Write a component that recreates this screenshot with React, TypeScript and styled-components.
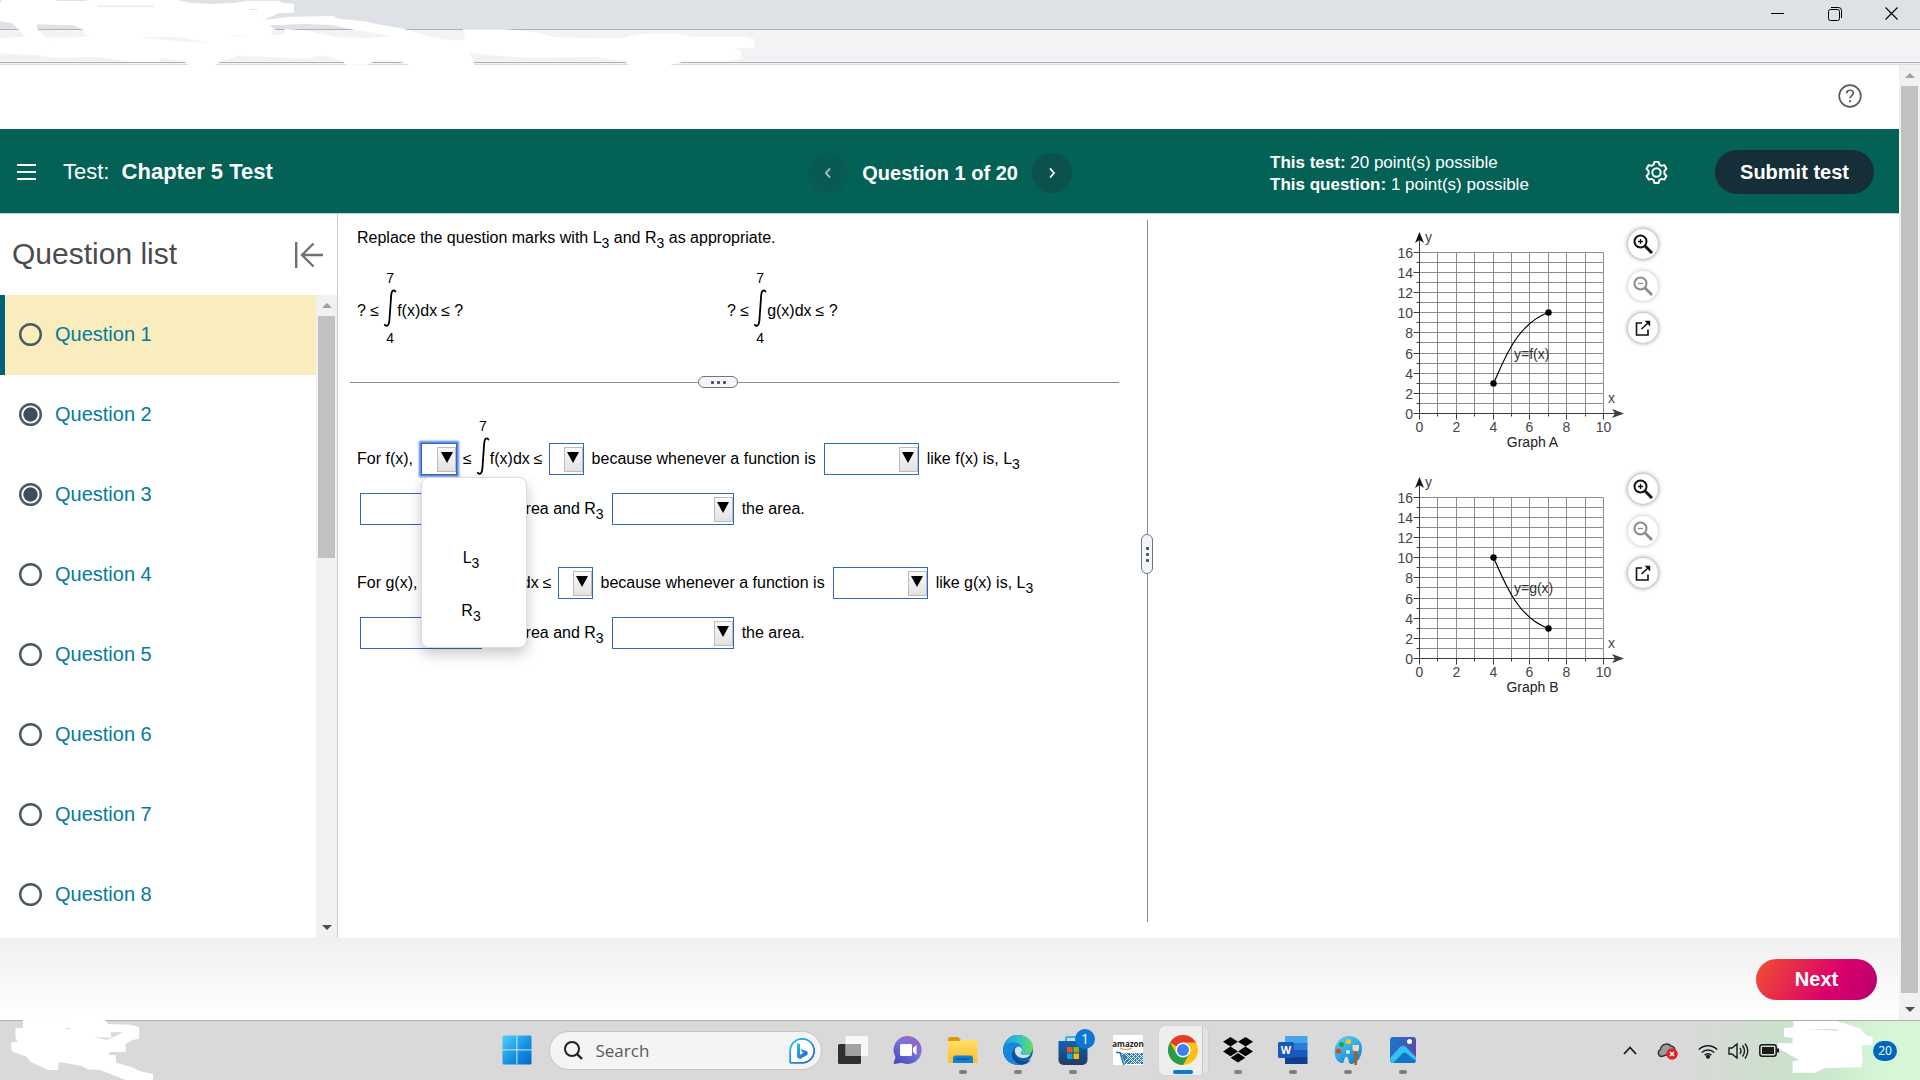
import React, { useState } from "react";
import styled, { createGlobalStyle, css } from "styled-components";

const GlobalStyle = createGlobalStyle`
  *, *::before, *::after { box-sizing: border-box; }
  body { margin: 0; background: #fff; }
  body, button, select, input {
    font-family: "Liberation Sans", Arial, Helvetica, sans-serif;
  }
  button { border: 0; padding: 0; background: none; color: inherit; cursor: pointer; }
  svg { display: block; flex: none; }
`;

/* ---------- window frame ---------- */

const Screen = styled.div`
  position: relative;
  display: flex;
  flex-direction: column;
  height: 100vh;
  overflow: hidden;
  font-size: 16px;
  color: #000;
`;

const TitleBar = styled.header`
  display: flex;
  justify-content: flex-end;
  gap: 32px;
  height: 30px;
  padding: 0 16px 6px 0;
  background: #dee1e6;
  border-bottom: 1px solid #b0b2b5;
`;

const WindowButton = styled.button`
  display: grid;
  place-items: center;
  width: 25px;
  height: 27px;
`;

const AddressBar = styled.div`
  height: 35px;
  background: #f1f3f4;
  border-bottom: 1px solid #dadcdf;

  &::after {
    content: "";
    display: block;
    height: 33px;
    border-bottom: 1px solid #b0b2b5;
  }
`;

const Viewport = styled.div`
  display: flex;
  flex: 1;
  min-height: 0;
`;

const Page = styled.div`
  display: flex;
  flex: 1;
  flex-direction: column;
  min-width: 0;
`;

const Track = styled.div`
  display: flex;
  flex: none;
  flex-direction: column;
  align-items: center;
  width: 21px;
  background: #f1f1f1;
`;

const TrackButton = styled.button<{ $dim?: boolean }>`
  display: grid;
  place-items: center;
  width: 21px;
  height: 21px;
  color: ${(p) => (p.$dim ? "#a0a0a0" : "#4d4d4d")};
`;

const TrackRoom = styled.div`
  flex: 1;
  width: 17px;
`;

const Thumb = styled.div<{ $share: number }>`
  height: ${(p) => p.$share}%;
  background: #c1c1c1;
`;

function ScrollBar({ share }: { share: number }) {
  return (
    <Track>
      <TrackButton $dim aria-label="Scroll up">
        <svg width="10" height="5" viewBox="0 0 10 5"><path d="M0 5 5 0l5 5z" fill="currentColor" /></svg>
      </TrackButton>
      <TrackRoom><Thumb $share={share} /></TrackRoom>
      <TrackButton aria-label="Scroll down">
        <svg width="10" height="5" viewBox="0 0 10 5"><path d="M0 0 5 5l5-5z" fill="currentColor" /></svg>
      </TrackButton>
    </Track>
  );
}

const HelpBar = styled.div`
  display: flex;
  align-items: center;
  justify-content: flex-end;
  height: 64px;
  padding: 0 37px 2px 0;
`;

const IconButton = styled.button`
  display: grid;
  place-items: center;
`;

/* ---------- test header ---------- */

const TestHeader = styled.div`
  display: grid;
  grid-template-columns: 791fr auto 198fr 604px;
  align-items: center;
  height: 85px;
  padding: 2px 25px 0 17px;
  background: #036156;
  border-bottom: 1px solid #b9cfd0;
  color: #fff;
`;

const TestName = styled.div`
  display: flex;
  align-items: center;
  gap: 27px;
`;

const TestTitle = styled.h1`
  margin: 0;
  font-size: 22px;
  line-height: 26px;
  font-weight: 400;

  b { margin-left: 6px; }
`;

const Pager = styled.nav`
  display: flex;
  align-items: center;
  gap: 14px;
  padding-top: 2px;
  font-size: 20px;
  font-weight: 700;
`;

const PagerButton = styled.button<{ $quiet?: boolean }>`
  display: grid;
  place-items: center;
  width: 40px;
  height: 40px;
  border-radius: 50%;
  background: ${(p) => (p.$quiet ? "#075b52" : "#0d514d")};
  color: ${(p) => (p.$quiet ? "#a9c8c4" : "#fff")};
`;

const HeaderSide = styled.div`
  grid-column: 4;
  display: flex;
  align-items: center;
  gap: 46px;
`;

const Points = styled.p`
  flex: 1;
  margin: 0;
  padding-top: 3px;
  font-size: 17px;
  line-height: 22px;
`;

const SubmitButton = styled.button`
  width: 159px;
  height: 44px;
  border-radius: 22px;
  background: #162e38;
  color: #fff;
  font-size: 20px;
  font-weight: 700;
`;

/* ---------- question list ---------- */

const Work = styled.div`
  display: flex;
  flex: 1;
  min-height: 0;
`;

const Sidebar = styled.aside`
  display: flex;
  flex: none;
  flex-direction: column;
  width: 338px;
  border-right: 1px solid #c9ccd6;
`;

const SidebarHead = styled.div`
  display: flex;
  align-items: center;
  justify-content: space-between;
  height: 81px;
  padding: 0 14px 0 12px;
`;

const SidebarTitle = styled.h2`
  margin: 0;
  padding-bottom: 2px;
  font-size: 30px;
  font-weight: 400;
  color: #4b4b4f;
`;

const SidebarBody = styled.div`
  display: flex;
  flex: 1;
  min-height: 0;
`;

const QuestionItems = styled.ul`
  flex: 1;
  margin: 0;
  padding: 0;
  overflow: hidden;
  list-style: none;
`;

const QuestionLink = styled.a<{ $active: boolean }>`
  display: flex;
  align-items: center;
  gap: 13px;
  height: 80px;
  padding: 0 0 2px 14px;
  border-left: 5px solid ${(p) => (p.$active ? "#00617a" : "transparent")};
  background: ${(p) => (p.$active ? "#f9ecbd" : "transparent")};
  color: #047a9c;
  font-size: 20px;
  line-height: 24px;
  text-decoration: none;
`;

function Mark({ done }: { done: boolean }) {
  return (
    <svg width="23" height="23" viewBox="0 0 23 23">
      <circle cx="11.5" cy="11.5" r="10.3" fill="none" stroke="#4b5865" strokeWidth="2.4" />
      {done && <circle cx="11.5" cy="11.5" r="7.2" fill="#404e5c" />}
    </svg>
  );
}

/* ---------- question pane ---------- */

const QuestionPane = styled.main`
  flex: 791 1 0;
  min-width: 0;
  padding: 12px 0 0 12px;
`;

const Prompt = styled.p`
  margin: 0 0 0 7px;
  line-height: 24px;
`;

const Sub = styled.span`
  font-size: 14px;
  line-height: 0;
  vertical-align: -5px;
`;

const Given = styled.div`
  display: grid;
  grid-template-columns: 1fr 1fr;
  height: 126px;
  padding: 24px 44px 0 7px;
`;

const MathLine = styled.span<{ $inset?: boolean }>`
  display: flex;
  flex: none;
  align-items: center;
  gap: 4px;
  height: 74px;
  white-space: nowrap;
  ${(p) => p.$inset && css`margin: 0 -2px;`}
`;

const IntegralBody = styled.span`
  display: flex;
  align-items: center;
`;

const IntegralSign = styled.span`
  display: flex;
  flex-direction: column;
  align-items: center;
  gap: 4px;
  padding-bottom: 6px;
  font-size: 14px;
  line-height: 14px;
`;

function Integral({ children }: { children: React.ReactNode }) {
  return (
    <IntegralBody>
      <IntegralSign>
        <span>7</span>
        <svg width="14" height="38" viewBox="0 0 14 38">
          <path
            d="M12.400 2.500C10.500.2 8.600 1.600 8.200 6L6.400 31.500C6 36.500 4 38 1.800 35.800"
            fill="none" stroke="#000" strokeWidth="1.800" strokeLinecap="round"
          />
        </svg>
        <span>4</span>
      </IntegralSign>
      {children}
    </IntegralBody>
  );
}

const Divider = styled.div`
  display: grid;
  grid-template-columns: 348fr 40px 381fr;
  align-items: center;
  margin-right: 22px;
`;

const HLine = styled.span`
  height: 1px;
  background: #858a9e;
`;

const Grip = styled.button<{ $upright?: boolean }>`
  display: flex;
  flex: none;
  flex-direction: ${(p) => (p.$upright ? "column" : "row")};
  align-items: center;
  justify-content: center;
  gap: 3px;
  width: ${(p) => (p.$upright ? 12 : 40)}px;
  height: ${(p) => (p.$upright ? 40 : 12)}px;
  border: 1px solid #6a7585;
  border-radius: 6px;
  background: #f3f5f7;

  i {
    width: 3px;
    height: 3px;
    background: #4c4f5c;
    border-radius: 1px;
  }
`;

const Answers = styled.form`
  padding: 37px 0 0 7px;
`;

const AnswerGroup = styled.div`
  margin-bottom: 24px;
`;

const AnswerRow = styled.div<{ $tall?: boolean }>`
  display: flex;
  align-items: center;
  gap: 8px;
  height: ${(p) => (p.$tall ? 68 : 32)}px;
  padding-left: ${(p) => (p.$tall ? 0 : 3)}px;
  white-space: nowrap;
`;

const Field = styled.span<{ $width: number }>`
  position: relative;
  display: grid;
  flex: none;
  align-items: center;
  width: ${(p) => p.$width}px;
  height: 32px;
`;

const Choice = styled.select<{ $open?: boolean }>`
  grid-area: 1 / 1;
  width: 100%;
  height: 32px;
  appearance: none;
  border: 1px solid #2f66cc;
  border-radius: 0;
  background: #fff;
  font-size: 16px;
  outline: none;
  ${(p) => p.$open && css`box-shadow: 0 0 2px 2px #5b83de;`}
`;

const Arrow = styled.span`
  grid-area: 1 / 1;
  justify-self: end;
  display: grid;
  place-items: center;
  width: 19px;
  height: 25px;
  margin-right: 1px;
  padding-bottom: 4px;
  border: 1px solid #bcbcbc;
  background: linear-gradient(#fafafa, #e2e2e2);
  pointer-events: none;
`;

const Menu = styled.ul`
  position: absolute;
  z-index: 2;
  top: 34px;
  left: 0;
  width: 106px;
  margin: 0;
  padding: 0 6px 10px 0;
  border: 1px solid #dcdcdc;
  border-radius: 8px;
  background: #fff;
  box-shadow: 0 6px 14px rgba(0, 0, 0, 0.22);
  list-style: none;
`;

const MenuItem = styled.li`
  display: grid;
  place-items: center;
  height: 53px;
`;

function Dropdown({ width, label, open }: { width: number; label: string; open?: boolean }) {
  return (
    <Field $width={width}>
      <Choice $open={open} aria-label={label} defaultValue="">
        <option value="" />
      </Choice>
      <Arrow>
        <svg width="12" height="11" viewBox="0 0 12 11"><path d="M0 0h12L6 11z" /></svg>
      </Arrow>
      {open && (
        <Menu role="listbox" aria-label={label}>
          <MenuItem role="option" />
          <MenuItem role="option"><span>L<Sub>3</Sub></span></MenuItem>
          <MenuItem role="option"><span>R<Sub>3</Sub></span></MenuItem>
        </Menu>
      )}
    </Field>
  );
}

function AnswerPart({ fn, open }: { fn: string; open?: boolean }) {
  return (
    <AnswerGroup>
      <AnswerRow $tall>
        <span>For {fn}(x),</span>
        <Dropdown width={36} label={`Lower bound for ${fn}`} open={open} />
        <MathLine $inset>≤<Integral>{fn}(x)dx</Integral>≤</MathLine>
        <Dropdown width={35} label={`Upper bound for ${fn}`} />
        <span>because whenever a function is</span>
        <Dropdown width={95} label={`Behaviour of ${fn}`} />
        <span>like {fn}(x) is, L<Sub>3</Sub></span>
      </AnswerRow>
      <AnswerRow>
        <Dropdown width={122} label={`Left sum of ${fn}`} />
        <span>the area and R<Sub>3</Sub></span>
        <Dropdown width={122} label={`Right sum of ${fn}`} />
        <span>the area.</span>
      </AnswerRow>
    </AnswerGroup>
  );
}

const VDivider = styled.div`
  display: flex;
  flex: none;
  flex-direction: column;
  align-items: center;
  width: 12px;
  padding: 6px 0 16px;
`;

const VLine = styled.span<{ $grow: number }>`
  flex: ${(p) => p.$grow};
  width: 1px;
  background: #858a9e;
`;

/* ---------- graphs ---------- */

const GraphPane = styled.section`
  display: flex;
  flex: 746 1 0;
  flex-direction: column;
  align-items: center;
  gap: 24px;
  min-width: 0;
  padding-top: 15px;
`;

const GraphRow = styled.div`
  display: flex;
  gap: 3px;
`;

const Figure = styled.figure`
  width: 230px;
  margin: 0;
`;

const Caption = styled.figcaption`
  padding-left: 46px;
  font-size: 14px;
  line-height: 16px;
  text-align: center;
  color: #222;
`;

const Plot = styled.svg`
  font-size: 14px;
  overflow: visible;
`;

const Tools = styled.div`
  display: flex;
  flex-direction: column;
  gap: 12px;
`;

const ToolButton = styled.button<{ $faint?: boolean }>`
  display: grid;
  place-items: center;
  width: 30px;
  height: 30px;
  border-radius: 50%;
  background: #fff;
  color: ${(p) => (p.$faint ? "#8a8a8a" : "#111")};
  box-shadow: 0 0 5px rgba(0, 0, 0, ${(p) => (p.$faint ? 0.28 : 0.5)});
`;

const gx = (v: number) => 24.5 + Math.round(v * 18.4);
const gy = (v: number) => 184.5 - Math.round(v * 10.08);
const steps = (n: number) => Array.from({ length: n + 1 }, (_, i) => i);

type Pt = [number, number];

function Graph({ name, label, labelY, curve }: { name: string; label: string; labelY: number; curve: Pt[] }) {
  const [a, b, c, d] = curve.map(([x, y]) => `${gx(x)} ${gy(y)}`);
  const ends = [curve[0], curve[3]];
  return (
    <GraphRow>
      <Figure>
        <Plot width="230" height="205" viewBox="0 0 230 205">
          <g stroke="#8c8c8c">
            {steps(10).slice(1).map((i) => <path key={`v${i}`} d={`M${gx(i)} ${gy(0)}V${gy(16)}`} />)}
            {steps(16).slice(1).map((i) => <path key={`h${i}`} d={`M${gx(0)} ${gy(i)}H${gx(10)}`} />)}
          </g>
          <g stroke="#3c3c3c">
            {steps(10).map((i) => <path key={`tx${i}`} d={`M${gx(i)} ${gy(0)}v${i % 2 ? 3 : 6}`} />)}
            {steps(16).map((i) => <path key={`ty${i}`} d={`M${gx(0)} ${gy(i)}h${i % 2 ? -3 : -6}`} />)}
            <path d={`M${gx(0)} ${gy(0)}V9M${gx(0)} ${gy(0)}H222`} />
          </g>
          <path d="M24.500 3 29 14l-4.500-3-4.500 3z" fill="#111" />
          <path d="M229 184.500 217 180l3 4.500-3 4.500z" fill="#3c3c3c" />
          <g fill="#444">
            {steps(8).map((i) => (
              <text key={i} x="18" y={gy(i * 2) + 5} textAnchor="end">{i * 2}</text>
            ))}
            {steps(5).map((i) => (
              <text key={i} x={gx(i * 2)} y="203" textAnchor="middle">{i * 2}</text>
            ))}
            <text x="30" y="13">y</text>
            <text x="213" y="174">x</text>
          </g>
          <text x="119" y={labelY} fill="#333">{label}</text>
          <path d={`M${a}C${b} ${c} ${d}`} fill="none" stroke="#000" strokeWidth="1.200" />
          {ends.map(([x, y]) => <circle key={x} cx={gx(x)} cy={gy(y)} r="3.200" />)}
        </Plot>
        <Caption>{name}</Caption>
      </Figure>
      <Tools>
        <ToolButton aria-label={`Zoom in on ${name}`}>
          <svg width="20" height="20" viewBox="0 0 20 20" fill="none" stroke="currentColor">
            <circle cx="7.500" cy="7.500" r="6" strokeWidth="2" />
            <path d="M7.500 5v5M5 7.500h5" strokeWidth="1.300" />
            <path d="m12 12 7 7" strokeWidth="3" />
          </svg>
        </ToolButton>
        <ToolButton $faint aria-label={`Zoom out of ${name}`}>
          <svg width="20" height="20" viewBox="0 0 20 20" fill="none" stroke="currentColor">
            <circle cx="7.500" cy="7.500" r="6" strokeWidth="2" />
            <path d="M5 7.500h5" strokeWidth="1.300" />
            <path d="m12 12 7 7" strokeWidth="2.600" />
          </svg>
        </ToolButton>
        <ToolButton aria-label={`Open ${name} in a window`}>
          <svg width="16" height="16" viewBox="0 0 16 16" fill="none" stroke="currentColor" strokeWidth="1.600">
            <path d="M7 3H1.500v12H13V9.500" />
            <path d="M6.500 9 13 3" />
            <path d="M9.500.8h5.700v5.700z" fill="currentColor" stroke="none" />
          </svg>
        </ToolButton>
      </Tools>
    </GraphRow>
  );
}

const Footer = styled.footer`
  display: flex;
  align-items: center;
  justify-content: flex-end;
  height: 82px;
  padding-right: 22px;
  background: linear-gradient(#f0f0f0, #fff);
`;

const NextButton = styled.button`
  width: 121px;
  height: 41px;
  border-radius: 21px;
  background: linear-gradient(120deg, #ee4b33 5%, #db006b 62%, #b8006f 95%);
  color: #fff;
  font-size: 20px;
  font-weight: 700;
`;

/* ---------- taskbar ---------- */

const Taskbar = styled.div`
  display: grid;
  flex: none;
  grid-template-columns: 1fr auto 1fr;
  height: 60px;
  border-top: 1px solid #b0b0b0;
  background: linear-gradient(to right, #d9d9d9 88%, #c9e3c9 94%, #d6f6d6 98%);
`;

const Apps = styled.div`
  grid-column: 2;
  display: flex;
  padding-top: 5px;
`;

const AppButton = styled.button<{ $front?: boolean }>`
  display: flex;
  flex-direction: column;
  align-items: center;
  gap: 5px;
  width: 49px;
  height: 49px;
  margin: 0 3px;
  padding-top: 9px;
  border-radius: 6px;
  ${(p) => p.$front && css`
    background: linear-gradient(to right, #eee 43px, #c9c9c9 43px 44px, #e2e2e2 44px);
    box-shadow: 0 0 1px #aaa;
  `}
`;

const Running = styled.i<{ $front?: boolean }>`
  width: ${(p) => (p.$front ? 20 : 8)}px;
  height: 4px;
  border-radius: 2px;
  background: ${(p) => (p.$front ? "#0a78d4" : "#7f7f7f")};
`;

const SearchBox = styled.label`
  display: flex;
  align-items: center;
  gap: 13px;
  width: 273px;
  height: 39px;
  margin: 5px 4px 0;
  padding: 0 6px 0 14px;
  border: 1px solid #c4c4c4;
  border-radius: 20px;
  background: #f4f4f4;

  input {
    flex: 1;
    min-width: 0;
    padding: 0;
    border: 0;
    outline: 0;
    background: none;
    color: #555;
    font: 17px "Open Sans", "Noto Sans", sans-serif;
  }
  input::placeholder { color: #5a5a5a; opacity: 1; }
`;

const Tray = styled.div`
  display: flex;
  align-items: center;
  justify-content: flex-end;
  padding-right: 23px;
`;

const TrayIcons = styled.div`
  display: flex;
  align-items: center;
  gap: 10px;
  margin-right: 94px;
`;

const TraySpaced = styled.span`
  margin-right: 10px;
`;

const Count = styled.span`
  display: grid;
  place-items: center;
  width: 24px;
  height: 20px;
  border-radius: 10px;
  background: #0067c0;
  color: #fff;
  font: 12px/20px "Open Sans", "Noto Sans", sans-serif;
`;

const icons: { name: string; running?: boolean; front?: boolean; art: React.ReactNode }[] = [
  {
    name: "Task view",
    art: (
      <>
        <rect x="0" y="9" width="23" height="20" rx="1.500" fill="#30302e" />
        <rect x="7.500" y="1" width="22.500" height="20" rx="1.500" fill="#fff" opacity=".82" />
        <rect x="7.500" y="9" width="15.500" height="12" fill="#8f8f8f" opacity=".75" />
      </>
    ),
  },
  {
    name: "Chat",
    art: (
      <>
        <path d="M15 1a14 14 0 1 1-6 26.800L1.500 29c-.8 0-1-.5-.8-1.200L2.500 22A14 14 0 0 1 15 1z" fill="url(#chat)" />
        <rect x="7" y="9" width="12" height="12" rx="1.500" fill="#fff" />
        <path d="m20 13 3.500-3v10L20 17z" fill="#fff" />
      </>
    ),
  },
  {
    name: "File Explorer",
    running: true,
    art: (
      <>
        <path d="M0 4a2 2 0 0 1 2-2h8l3 3-2 5H0z" fill="#dc9a07" />
        <path d="M0 6h11l2-1h16.500v22a1 1 0 0 1-1 1H1a1 1 0 0 1-1-1z" fill="url(#folder)" />
        <path d="M5 28v-5a2.500 2.500 0 0 1 2.500-2.500h15A2.500 2.500 0 0 1 25 23v5z" fill="#1180d0" />
        <path d="M8.500 24h13" stroke="#0a58a0" strokeWidth="1.500" />
      </>
    ),
  },
  {
    name: "Edge",
    running: true,
    art: (
      <>
        <circle cx="15" cy="15" r="15" fill="#0c63b5" />
        <path d="M0 14C1 6 7 0 15 0c9 0 15 6 15 12 0 5-3.500 8-8 8-3 0-4.500-1-4.500-2 0-1 1.500-1.500 1.500-4 0-3-4-6-9-6-5 0-8 3-10 6z" fill="url(#edge)" />
        <path d="M0 14C2 9 6 7.500 10 7.500c5 0 9 2.500 9 6.500-1-2-3-3-5-2.500-3 1-5 4-4 8 1 5 5 8.500 8 10C7 31 0 24 0 14z" fill="#1488dc" />
        <path d="M11.500 14.500c-2 6 3 12 10 12 3 0 5-.8 6.500-2-2 3-5 5-9 5.500-6-1-10.500-6-10-11 .2-2 1-3.500 2.500-4.500z" fill="#134a94" />
        <path d="M12 14c1-2 3-3 5-2 1.500.7 2 2 2 3 0 1.500-1.500 2-1.500 3s1.500 2 4.500 2c3.500 0 5-1 6-2-1 3-4 5-8 5-5 0-9-4-8-9z" fill="#dbe3ea" />
      </>
    ),
  },
  {
    name: "Microsoft Store",
    running: true,
    art: (
      <>
        <path d="M8 7V4a2 2 0 0 1 2-2h10a2 2 0 0 1 2 2v3" fill="none" stroke="#27b8ef" strokeWidth="2" />
        <path d="M0.500 6h29v19a5 5 0 0 1-5 5h-19a5 5 0 0 1-5-5z" fill="url(#store)" />
        <path d="M9 12h5.500v5.500H9z" fill="#f25022" />
        <path d="M15.500 12H21v5.500h-5.500z" fill="#7fba00" />
        <path d="M9 18.500h5.500V24H9z" fill="#00a4ef" />
        <path d="M15.500 18.500H21V24h-5.500z" fill="#ffb900" />
        <circle cx="27" cy="4" r="10" fill="#0b78d6" />
        <text x="27" y="9" textAnchor="middle" fill="#fff" fontSize="14" fontFamily="Open Sans, sans-serif">1</text>
      </>
    ),
  },
  {
    name: "Amazon",
    art: (
      <>
        <path d="M0 0h30v30H0z" fill="#fff" />
        <text x="15" y="11.500" textAnchor="middle" fontSize="8" fontWeight="700" fontFamily="Open Sans, sans-serif" fill="#222">amazon</text>
        <path d="M7 13q6 3 12 0" fill="none" stroke="#f29a2e" strokeWidth="1.200" />
        <path d="M3 17.500h4L11 30" fill="none" stroke="#1c72a8" strokeWidth="1.500" />
        <path d="M8 18h22v11H12z" fill="#2d81b3" />
        <path
          d="m9 20 2-2 11 11m-9-11 11 11M17 18l11 11M21 18l9 9M25 18l5 5M11 27l9-9M13 29l11-11M17 29l11-11M21 29l9-9M25 29l5-5"
          stroke="#fff" strokeWidth=".9" fill="none"
        />
      </>
    ),
  },
  {
    name: "Chrome",
    running: true,
    front: true,
    art: (
      <>
        <circle cx="15" cy="15" r="15" fill="#fbc116" />
        <path d="M15 15 2 7.500A15 15 0 0 1 28 7.500H15z" fill="#e33b2e" />
        <path d="M2 7.500A15 15 0 0 0 15 30l6.500-11.200L8.500 18.700z" fill="#2a9c49" />
        <circle cx="15" cy="15" r="7.500" fill="#fff" />
        <circle cx="15" cy="15" r="6" fill="#3c82ee" />
      </>
    ),
  },
  {
    name: "Dropbox",
    running: true,
    art: <path d="m7.500 2 7.500 4.800-7.500 4.800L0 6.800zM22.500 2 30 6.800l-7.500 4.800L15 6.800zM0 16.400l7.500-4.800 7.500 4.800-7.500 4.800zM22.500 11.600l7.500 4.800-7.500 4.800-7.500-4.800zM7.700 22.700l7.300-4.700 7.300 4.700L15 27.500z" />,
  },
  {
    name: "Word",
    running: true,
    art: (
      <>
        <path d="M7 1h22.500v8H7z" fill="#42a5ee" />
        <path d="M7 8h22.500v7H7z" fill="#2c7cd6" />
        <path d="M7 15h22.500v7H7z" fill="#185abd" />
        <path d="M7 22h22.500v7H7z" fill="#103f91" />
        <rect x="0" y="7" width="16" height="16" rx="1.500" fill="#1b57b8" />
        <text x="8" y="19" textAnchor="middle" fill="#fff" fontSize="11" fontWeight="700">W</text>
      </>
    ),
  },
  {
    name: "Paint",
    running: true,
    art: (
      <>
        <path d="M16 1c8 0 13 6 13 12 0 8-4 15-10 16-4 .5-3-4-4-6-1.500-3-4 0-4 3 0 2-2 3-5 1-3-2-4.500-6-4.500-10C1.500 8 8 1 16 1z" fill="url(#paint)" />
        <circle cx="15.500" cy="6.500" r="2.600" fill="#f9c412" />
        <circle cx="8.500" cy="9.500" r="2.600" fill="#2aa24a" />
        <circle cx="5.500" cy="16" r="2.600" fill="#d94a20" />
        <circle cx="15" cy="17" r="2" fill="#dff1fb" />
        <path d="M19.500 10h6.500v4l-1.500 3h-3.500l-1.500-3z" fill="#efd9bb" />
        <path d="M21 16h3.500l-.5 14h-2.500z" fill="#a5602a" />
      </>
    ),
  },
  {
    name: "Photos",
    running: true,
    art: (
      <>
        <rect x="2" y="2" width="26" height="26" rx="3" fill="url(#photos)" />
        <path d="m2 23 10-11q3-2.500 6 0l10 10v3a3 3 0 0 1-3 3H5a3 3 0 0 1-3-3z" fill="#33c1ef" />
        <path d="m5 28 10-10q1.500-1 3 0l10 8a3 3 0 0 1-3 2z" fill="#1276c8" />
        <circle cx="21.500" cy="6.500" r="2.500" fill="#fff" />
      </>
    ),
  },
];

/* Shared paint definitions, kept out of the flow. */
const Defs = styled.svg`
  position: absolute;
`;

function Gradients() {
  return (
    <Defs width="0" height="0" aria-hidden="true">
      <defs>
        <linearGradient id="win" x2="1" y2="1"><stop stopColor="#4fd0fb" /><stop offset=".6" stopColor="#118de0" /><stop offset="1" stopColor="#0468c8" /></linearGradient>
        <linearGradient id="chat" x1="1" x2=".3" y2="1"><stop stopColor="#a45fb5" /><stop offset=".5" stopColor="#7a74dd" /><stop offset="1" stopColor="#4a50c0" /></linearGradient>
        <linearGradient id="folder" x2="0" y2="1"><stop stopColor="#ffdf6b" /><stop offset="1" stopColor="#fcbd2c" /></linearGradient>
        <linearGradient id="edge"><stop stopColor="#1d9bdc" /><stop offset=".5" stopColor="#2fc0d0" /><stop offset="1" stopColor="#67dd5d" /></linearGradient>
        <linearGradient id="store" x2="0" y2="1"><stop stopColor="#0d62b4" /><stop offset="1" stopColor="#253a66" /></linearGradient>
        <linearGradient id="paint" x2=".6" y2="1"><stop stopColor="#5fd4f5" /><stop offset="1" stopColor="#1287d3" /></linearGradient>
        <linearGradient id="photos" x2="1" y2=".4"><stop stopColor="#1578d0" /><stop offset="1" stopColor="#5a4aa8" /></linearGradient>
        <linearGradient id="bing" x2="1" y2="1"><stop stopColor="#22c5ea" /><stop offset="1" stopColor="#2358d8" /></linearGradient>
      </defs>
    </Defs>
  );
}

/* White brush strokes that cover private parts of the screen. */
const Brush = styled.svg<{ $corner: "top" | "left" | "right" }>`
  position: absolute;
  pointer-events: none;
  ${(p) => p.$corner === "top" && css`top: 0; left: 0;`}
  ${(p) => p.$corner === "left" && css`bottom: 0; left: 0;`}
  ${(p) => p.$corner === "right" && css`bottom: 0; right: 40px;`}
`;

export default function App() {
  const [current, setCurrent] = useState(1);
  const done = [2, 3];
  return (
    <Screen>
      <GlobalStyle />
      <Gradients />
      <TitleBar>
        <WindowButton aria-label="Minimize">
          <svg width="13" height="13" viewBox="0 0 13 13"><path d="M0 6.500h13" stroke="#000" /></svg>
        </WindowButton>
        <WindowButton aria-label="Restore">
          <svg width="14" height="14" viewBox="0 0 14 14" fill="none" stroke="#000">
            <rect x=".5" y="2.500" width="11" height="11" rx="2" />
            <path d="M3 .5h7.500a3 3 0 0 1 3 3V11" />
          </svg>
        </WindowButton>
        <WindowButton aria-label="Close">
          <svg width="13" height="13" viewBox="0 0 13 13"><path d="m.5.500 12 12m0-12-12 12" stroke="#000" strokeWidth="1.100" /></svg>
        </WindowButton>
      </TitleBar>
      <AddressBar />
      <Viewport>
        <Page>
          <HelpBar>
            <IconButton aria-label="Help">
              <svg width="24" height="24" viewBox="0 0 24 24" fill="none" stroke="#565b5e">
                <circle cx="12" cy="12" r="10.800" strokeWidth="1.700" />
                <path d="M8.700 9.300c0-4 6.600-4 6.600-.3 0 2.600-3.300 2.600-3.300 5.300" strokeWidth="1.700" />
                <path d="M12 16.300v2" strokeWidth="1.900" />
              </svg>
            </IconButton>
          </HelpBar>
          <TestHeader>
            <TestName>
              <IconButton aria-label="Menu">
                <svg width="19" height="18" viewBox="0 0 19 18" stroke="#fff" strokeWidth="2"><path d="M0 2h19M0 9h19M0 16h19" /></svg>
              </IconButton>
              <TestTitle>Test: <b>Chapter 5 Test</b></TestTitle>
            </TestName>
            <Pager>
              <PagerButton $quiet aria-label="Previous question">
                <svg width="6" height="10" viewBox="0 0 6 10" fill="none" stroke="currentColor" strokeWidth="1.800"><path d="M5 .5 1 5l4 4.500" /></svg>
              </PagerButton>
              <span>Question {current} of 20</span>
              <PagerButton aria-label="Next question">
                <svg width="6" height="10" viewBox="0 0 6 10" fill="none" stroke="currentColor" strokeWidth="1.800"><path d="m1 .5 4 4.500-4 4.500" /></svg>
              </PagerButton>
            </Pager>
            <HeaderSide>
              <Points>
                <b>This test:</b> 20 point(s) possible<br />
                <b>This question:</b> 1 point(s) possible
              </Points>
              <IconButton aria-label="Settings">
                <svg width="25" height="25" viewBox="0 0 24 24" fill="none" stroke="#fff" strokeWidth="1.900" strokeLinejoin="round">
                  <path d="M10 1.800h4l.8 2.700 2 1.100 2.700-.7 2 3.500-1.900 2v2.900l1.900 2-2 3.500-2.700-.7-2 1.200-.8 2.700h-4l-.8-2.700-2-1.200-2.700.7-2-3.500 1.900-2v-2.900l-1.900-2 2-3.500 2.700.7 2-1.100z" />
                  <circle cx="12" cy="12" r="4" />
                </svg>
              </IconButton>
              <SubmitButton>Submit test</SubmitButton>
            </HeaderSide>
          </TestHeader>
          <Work>
            <Sidebar>
              <SidebarHead>
                <SidebarTitle>Question list</SidebarTitle>
                <IconButton aria-label="Collapse question list">
                  <svg width="28" height="26" viewBox="0 0 28 26" fill="none" stroke="#6a7370" strokeWidth="2.400">
                    <path d="M1.200 0v26M28 13H7M18.500 1.500 7 13l11.500 11.500" />
                  </svg>
                </IconButton>
              </SidebarHead>
              <SidebarBody>
                <QuestionItems>
                  {[1, 2, 3, 4, 5, 6, 7, 8].map((n) => (
                    <li key={n}>
                      <QuestionLink href={`#q${n}`} $active={n === current} onClick={() => setCurrent(n)}>
                        <Mark done={done.includes(n)} />
                        Question {n}
                      </QuestionLink>
                    </li>
                  ))}
                </QuestionItems>
                <ScrollBar share={40.3} />
              </SidebarBody>
            </Sidebar>
            <QuestionPane>
              <Prompt>Replace the question marks with L<Sub>3</Sub> and R<Sub>3</Sub> as appropriate.</Prompt>
              <Given>
                <MathLine>? ≤<Integral>f(x)dx</Integral>≤ ?</MathLine>
                <MathLine>? ≤<Integral>g(x)dx</Integral>≤ ?</MathLine>
              </Given>
              <Divider>
                <HLine />
                <Grip type="button" aria-label="Resize question"><i /><i /><i /></Grip>
                <HLine />
              </Divider>
              <Answers>
                <AnswerPart fn="f" open />
                <AnswerPart fn="g" />
              </Answers>
            </QuestionPane>
            <VDivider>
              <VLine $grow={314} />
              <Grip $upright aria-label="Resize panes"><i /><i /><i /></Grip>
              <VLine $grow={348} />
            </VDivider>
            <GraphPane>
              <Graph name="Graph A" label="y=f(x)" labelY={130} curve={[[4, 3], [4.6, 5.5], [5.3, 8.9], [7, 10]]} />
              <Graph name="Graph B" label="y=g(x)" labelY={119} curve={[[4, 10], [4.6, 7.5], [5.3, 4.1], [7, 3]]} />
            </GraphPane>
          </Work>
          <Footer><NextButton>Next</NextButton></Footer>
        </Page>
        <ScrollBar share={99.3} />
      </Viewport>
      <Taskbar>
        <Apps>
          <AppButton aria-label="Start">
            <svg width="30" height="30" viewBox="0 0 30 30" fill="url(#win)">
              <path d="M.5 2A1.500 1.500 0 0 1 2 .5h26A1.500 1.500 0 0 1 29.500 2v26a1.500 1.500 0 0 1-1.500 1.500H2A1.500 1.500 0 0 1 .5 28z" />
              <path d="M14.900.500v29M.5 14.900h29" stroke="#d9e6ee" />
            </svg>
          </AppButton>
          <SearchBox>
            <svg width="19" height="19" viewBox="0 0 19 19" fill="none" stroke="#222" strokeWidth="2">
              <circle cx="8" cy="8" r="7" /><path d="m13 13 5 5" strokeWidth="2.400" />
            </svg>
            <input aria-label="Search" placeholder="Search" />
            <svg width="26" height="26" viewBox="0 0 26 26">
              <path d="M1.200 25V13A12 12 0 1 1 13 24.800H1.200" fill="#fff" stroke="url(#bing)" strokeWidth="1.800" />
              <path d="m8 5 3 1.200v10.500l3.500-2-1.700-.9-1.100-2.800 6.800 2.400v3.400L11 21l-3-1.800z" fill="url(#bing)" />
            </svg>
          </SearchBox>
          {icons.map((icon) => (
            <AppButton key={icon.name} aria-label={icon.name} $front={icon.front}>
              <svg width="30" height="30" viewBox="0 0 30 30" overflow="visible">{icon.art}</svg>
              {icon.running && <Running $front={icon.front} />}
            </AppButton>
          ))}
        </Apps>
        <Tray>
          <TrayIcons>
            <TraySpaced>
              <svg width="14" height="9" viewBox="0 0 14 9" fill="none" stroke="#1b1b1b" strokeWidth="1.800"><path d="m1 8 6-6.500L13 8" /></svg>
            </TraySpaced>
            <TraySpaced>
              <svg width="21" height="18" viewBox="0 0 21 18">
                <path d="M5 14.500c-4 0-5-5.500-1.500-7C4 2 11 .5 14 4c3 .3 4.500 3 3.500 6z" fill="#9b9b9b" stroke="#333" strokeWidth="1.500" />
                <circle cx="15" cy="12" r="5.800" fill="#dc2430" />
                <path d="m13 10 4 4m0-4-4 4" stroke="#fff" strokeWidth="1.400" />
              </svg>
            </TraySpaced>
            <svg width="20" height="16" viewBox="0 0 20 16" fill="none" stroke="#1b1b1b" strokeWidth="1.500">
              <path d="M.8 6.500a13 13 0 0 1 18.400 0M3.800 9.500a9 9 0 0 1 12.400 0M6.600 12.200a5 5 0 0 1 6.800 0" />
              <circle cx="10" cy="13.800" r="1.300" fill="#1b1b1b" />
            </svg>
            <svg width="21" height="18" viewBox="0 0 21 18" fill="none" stroke="#1b1b1b" strokeWidth="1.400">
              <path d="M1 6h3l5-4v14l-5-4H1zM12 6q2 3 0 6M14.500 3.500q4 5.500 0 11M17 1.500q5.500 7.500 0 15" />
            </svg>
            <svg width="20" height="13" viewBox="0 0 20 13">
              <rect x=".8" y=".8" width="16.400" height="11.400" rx="2.500" fill="none" stroke="#1b1b1b" strokeWidth="1.500" />
              <path d="M3 3h12v7H3zM18 4.500h2v4h-2z" fill="#1b1b1b" />
            </svg>
          </TrayIcons>
          <Count>20</Count>
        </Tray>
      </Taskbar>
      <Brush $corner="top" width="768" height="66" viewBox="0 0 1254 198" preserveAspectRatio="none" aria-hidden="true">
        <path
          fill="#fff"
          fillRule="evenodd"
          d="M0 8 3 0H92V3H135L150 0H290L310 8 345 12 385 8 405 2H455L462 8 480 12V38L455 40 430 60 475 50 545 48 552 56 595 64 615 72 655 85 670 92 700 110 745 122 760 118 756 88H825L855 92 880 98 905 112 1010 116 1045 102 1100 100 1130 110H1215L1232 118V142L1195 146 1210 152V176L1190 184H1120L1110 188 1085 198H1030L1020 184 975 170 870 174 800 166 764 158 774 180V198H675L650 184 615 181 600 194H565L560 184 530 166 495 176 390 167 360 184 350 198H310L300 184 262 172V186H212L160 170 95 174 60 166 0 160V115L42 110 20 70 0 64ZM60 73 120 76 136 90V103L145 105 135 112 75 113 85 123 62 92ZM160 17H252V20H160ZM235 111 295 112 340 128 310 126 235 114ZM370 105H407L390 108ZM440 76 500 72 540 75 580 90 640 108 600 114 550 112 505 93 465 86 463 104H440L450 90ZM408 27H420V30H408Z"
        />
      </Brush>
      <Brush $corner="left" width="160" height="67" viewBox="0 399 392 201" preserveAspectRatio="none" aria-hidden="true">
        <path
          fill="#fff"
          fillRule="evenodd"
          d="M56 420 160 412 180 404H235L258 420 264 432 320 434 341 442V476L325 480 308 492V516H270L264 524 284 526V548L320 560 345 574 375 582V600H308L245 570 215 568 200 558 145 546 142 570H118L75 545 65 530 28 514V487L43 485 38 472V445L56 444ZM228 471 272 473V457H300L290 464 262 479ZM160 444H172V447H160Z"
        />
      </Brush>
      <Brush $corner="right" width="110" height="60" viewBox="630 300 330 180" aria-hidden="true">
        <path
          fill="#fff"
          fillRule="evenodd"
          d="M700 303H830L860 312 900 325 918 345 938 352V374L905 376 908 415 905 442 795 444 765 458H698V424L718 420 690 405 655 384V368L698 370V354L672 350V324L700 322ZM735 327H835V332Z"
        />
      </Brush>
    </Screen>
  );
}
